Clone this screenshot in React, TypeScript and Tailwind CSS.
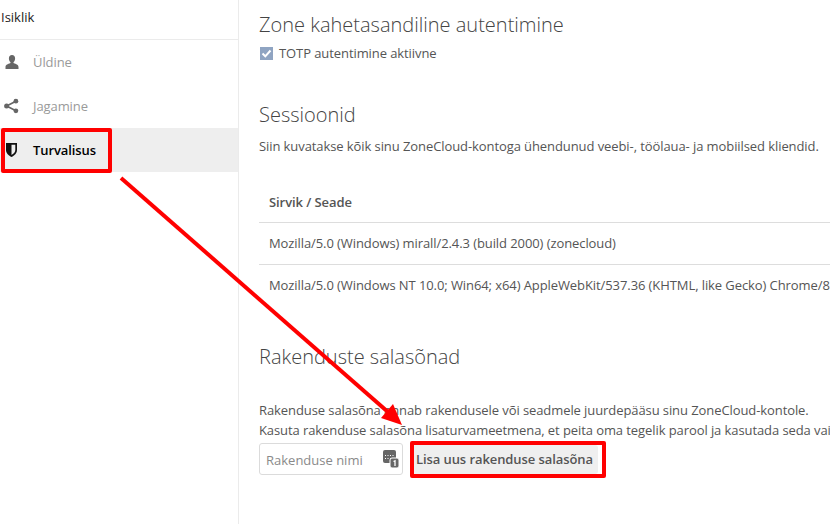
const font = { fontFamily: '"Open Sans", sans-serif' };

function UserIcon() {
  return (
    <svg width="16" height="16" viewBox="0 0 16 16" className="fill-[#666]">
      <path d="M8 1C6 1 4.900 2.500 4.900 4.400c0 1.500.6 2.800 1.500 3.600.3.400.2 1-.3 1.300C4 10.200 1.500 10.600 1.500 13v2h13v-2c0-2.400-2.500-2.800-4.600-3.700-.5-.3-.6-.9-.3-1.300.9-.8 1.500-2.100 1.500-3.600C11.100 2.500 10 1 8 1z" />
    </svg>
  );
}

function ShareIcon() {
  return (
    <svg width="16" height="16" viewBox="0 0 16 16" className="fill-[#666]">
      <circle cx="2.600" cy="8" r="2.500" />
      <circle cx="11.900" cy="3.200" r="2.400" />
      <circle cx="11.900" cy="12.800" r="2.400" />
      <path d="M2.600 8 11.900 3.200M2.600 8l9.300 4.800" stroke="#666" strokeWidth="1.600" fill="none" />
    </svg>
  );
}

function ShieldIcon() {
  return (
    <svg width="14" height="16" viewBox="0 0 14 16">
      <path d="M2 1h11v7c0 3.300-2.700 5.700-5.500 7C4.700 13.700 2 11.300 2 8z" fill="#111" />
      <path d="M7.500 2.800h3.800V8c0 2.200-1.900 3.900-3.800 5z" fill="#eee" />
    </svg>
  );
}

function KeypadIcon() {
  return (
    <svg width="16" height="18" viewBox="0 0 16 18">
      <rect x="0" y="0" width="13" height="13" rx="2" fill="#666" />
      <path d="M2 5h1v1H2zM4.500 5h1v1h-1zM7 5h1v1H7zM9.500 5h1v1h-1zM2 8h1v1H2zM4.500 8h1v1h-1zM7 8h1v1H7z" fill="#fff" />
      <rect x="7" y="8" width="9" height="10" rx="2" fill="#666" stroke="#fff" strokeWidth="1" />
      <path d="M10.500 11.500 12 10.800V16" stroke="#fff" strokeWidth="1.300" fill="none" />
    </svg>
  );
}

function Sidebar() {
  const items = [
    { label: "Üldine", icon: <UserIcon /> },
    { label: "Jagamine", icon: <ShareIcon /> },
    { label: "Turvalisus", icon: <ShieldIcon />, active: true },
  ];
  return (
    <div className="w-[239px] shrink-0 border-r border-[#ebebeb]">
      <div className="h-10 pl-[1px] pt-[8px] border-b border-[#ebebeb] text-[13px] leading-[18px] text-[#222]">Isiklik</div>
      {items.map(item => (
        <div
          key={item.label}
          className={`h-11 flex items-center text-[13px] tracking-[-0.085px] ${item.active ? "bg-[#eeeeee] font-semibold text-black" : "text-[#9a9a9a]"}`}
        >
          <div className="w-[33px] pl-[4px] flex">{item.icon}</div>
          <span className="pt-[2px]">{item.label}</span>
        </div>
      ))}
    </div>
  );
}

function Main() {
  return (
    <div className="flex-1 min-w-0 overflow-hidden pl-5 text-[13px] leading-[19px] tracking-[-0.085px] text-[#555]">
      <h2 className="mt-[11px] text-[20px] leading-[28px] tracking-normal font-light text-[#444]">Zone kahetasandiline autentimine</h2>
      <div className="mt-[5px] flex items-center h-[18px]">
        <span className="w-[13px] h-[13px] ml-[1px] mr-[6px] bg-[#8fa4c2] flex items-center justify-center">
          <svg width="11" height="11" viewBox="0 0 11 11">
            <path d="M1.500 5.500 4.300 8.300 9.500 2.500" stroke="#fff" strokeWidth="2" fill="none" />
          </svg>
        </span>
        <span>TOTP autentimine aktiivne</span>
      </div>

      <h2 className="mt-[39px] text-[20px] leading-[28px] tracking-normal font-light text-[#444]">Sessioonid</h2>
      <p className="mt-[8px] whitespace-nowrap">Siin kuvatakse kõik sinu ZoneCloud-kontoga ühendunud veebi-, töölaua- ja mobiilsed kliendid.</p>

      <div className="mt-[25px] whitespace-nowrap">
        <div className="h-[42px] pl-[10px] pt-[2px] flex items-center font-semibold border-b border-[#dddddd]">Sirvik / Seade</div>
        <div className="h-[42px] pl-[10px] flex items-center border-b border-[#dddddd]">Mozilla/5.0 (Windows) mirall/2.4.3 (build 2000) (zonecloud)</div>
        <div className="h-[42px] pl-[10px] pb-[2px] flex items-center">Mozilla/5.0 (Windows NT 10.0; Win64; x64) AppleWebKit/537.36 (KHTML, like Gecko) Chrome/85.0.4183.121 Safari/537.36</div>
      </div>

      <h2 className="mt-[36px] text-[20px] leading-[28px] tracking-normal font-light text-[#444]">Rakenduste salasõnad</h2>
      <p className="mt-[30px] whitespace-nowrap">Rakenduse salasõna annab rakendusele või seadmele juurdepääsu sinu ZoneCloud-kontole.</p>
      <p className="whitespace-nowrap mt-px">Kasuta rakenduse salasõna lisaturvameetmena, et peita oma tegelik parool ja kasutada seda vaid rakenduste jaoks.</p>
      <div className="mt-[3px] flex items-center gap-[8px]">
        <div className="w-[144px] h-[32px] border border-[#dbdbdb] rounded-[3px] flex items-center justify-between pl-[6px] pr-[3px] text-[#8a8a8a]">
          <span className="pt-[2px] tracking-normal">Rakenduse nimi</span>
          <KeypadIcon />
        </div>
        <button className="h-[29px] px-[5px] bg-[#efefef] font-semibold text-[#555] rounded-[3px]">Lisa uus rakenduse salasõna</button>
      </div>
    </div>
  );
}

export default function App() {
  return (
    <div className="relative w-[830px] h-[524px] overflow-hidden bg-white flex" style={font}>
      <Sidebar />
      <Main />

      {/* annotation drawn on top of the screenshot */}
      <div className="absolute left-[1px] top-[128px] w-[111px] h-[45px] border-[4px] border-[#ff0000] rounded-[2px]" />
      <div className="absolute left-[410px] top-[441px] w-[196px] h-[37px] border-[4px] border-[#ff0000] rounded-[2px]" />
      <svg className="absolute left-0 top-0 pointer-events-none" width="830" height="524">
        <line x1="121" y1="178" x2="388" y2="412" stroke="#ff0000" strokeWidth="4" />
        <polygon points="402,425 381,418 393,404" fill="#ff0000" />
      </svg>
    </div>
  );
}
